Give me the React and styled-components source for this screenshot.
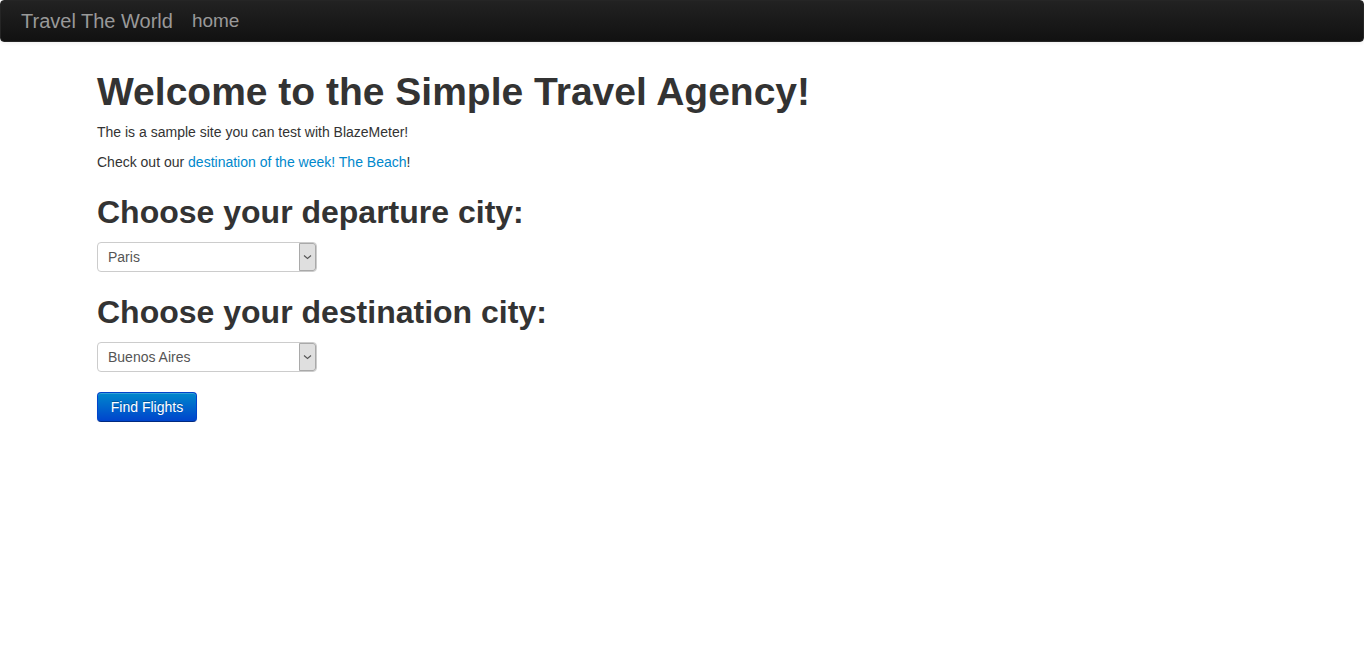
import React from "react";
import styled, { createGlobalStyle } from "styled-components";

const GlobalStyle = createGlobalStyle`
  html, body {
    margin: 0;
    padding: 0;
    background: #fff;
  }
  body {
    font-family: "Liberation Sans", Arial, sans-serif;
    font-size: 14px;
    line-height: 20px;
    color: #333;
  }
`;

const Navbar = styled.div`
  display: flex;
  align-items: center;
  gap: 19px;
  height: 40px;
  padding: 0 20px;
  border: 1px solid #252525;
  border-radius: 4px;
  background-image: linear-gradient(to bottom, #222222, #111111);
  box-shadow: 0 1px 4px rgba(0, 0, 0, 0.065);
  margin-bottom: 20px;
`;

const NavLink = styled.a`
  color: #999;
  font-size: ${(p) => p.size || 20}px;
  line-height: 20px;
  text-decoration: none;
`;

const Container = styled.div`
  width: 1170px;
  margin: 0 auto;
  padding-top: 10px;
`;

const Title = styled.h1`
  margin: 0 0 10px;
  font-size: 39px;
  line-height: 40px;
  font-weight: bold;
  color: #333;
`;

const Text = styled.p`
  margin: 0 0 10px;
`;

const Link = styled.a`
  color: #0088cc;
  text-decoration: none;
`;

const Form = styled.form`
  margin-top: 20px;
`;

const Subtitle = styled.h2`
  margin: 0 0 10px;
  font-size: 32px;
  line-height: 40px;
  font-weight: bold;
  color: #333;
`;

const SelectWrap = styled.div`
  position: relative;
  width: 220px;
  height: 30px;
  margin-bottom: 20px;
`;

const Select = styled.select`
  appearance: none;
  -webkit-appearance: none;
  box-sizing: border-box;
  width: 220px;
  height: 30px;
  padding: 4px 10px;
  border: 1px solid #ccc;
  border-radius: 4px;
  background: #fff;
  color: #555;
  font-family: "Liberation Sans", Arial, sans-serif;
  font-size: 14px;
  line-height: 20px;
  outline: none;
`;

const ArrowBox = styled.span`
  position: absolute;
  top: 1px;
  right: 1px;
  bottom: 1px;
  width: 17px;
  display: flex;
  align-items: center;
  justify-content: center;
  box-sizing: border-box;
  border: 1px solid #a9a9a9;
  border-radius: 0 3px 3px 0;
  background: #dfdfdf;
  pointer-events: none;
`;

const Button = styled.button`
  box-sizing: border-box;
  width: 100px;
  height: 30px;
  padding: 4px 12px;
  border: 1px solid #0044cc;
  border-bottom-color: #002a80;
  border-radius: 4px;
  background-image: linear-gradient(to bottom, #0088cc, #0044cc);
  box-shadow: inset 0 1px 0 rgba(255, 255, 255, 0.2), 0 1px 2px rgba(0, 0, 0, 0.05);
  color: #fff;
  font-family: "Liberation Sans", Arial, sans-serif;
  font-size: 14px;
  line-height: 20px;
  text-shadow: 0 -1px 0 rgba(0, 0, 0, 0.25);
  cursor: pointer;
`;

const Chevron = () => (
  <svg width="9" height="6" viewBox="0 0 9 6">
    <path d="M1 1.5 L4.5 4.5 L8 1.5" fill="none" stroke="#555" strokeWidth="1.1" />
  </svg>
);

const CitySelect = ({ name, options }) => (
  <SelectWrap>
    <Select name={name} defaultValue={options[0]}>
      {options.map((o) => (
        <option key={o} value={o}>
          {o}
        </option>
      ))}
    </Select>
    <ArrowBox>
      <Chevron />
    </ArrowBox>
  </SelectWrap>
);

const App = () => {
  return (
    <>
      <GlobalStyle />
      <Navbar>
        <NavLink href="#">Travel The World</NavLink>
        <NavLink href="#" size={19}>home</NavLink>
      </Navbar>
      <Container>
        <Title>Welcome to the Simple Travel Agency!</Title>
        <Text>The is a sample site you can test with BlazeMeter!</Text>
        <Text>
          Check out our <Link href="#">destination of the week! The Beach</Link>!
        </Text>
        <Form onSubmit={(e) => e.preventDefault()}>
          <Subtitle>Choose your departure city:</Subtitle>
          <CitySelect
            name="fromPort"
            options={["Paris", "Philadelphia", "Boston", "Portland", "San Diego", "Mexico City", "São Paolo"]}
          />
          <Subtitle>Choose your destination city:</Subtitle>
          <CitySelect
            name="toPort"
            options={["Buenos Aires", "Rome", "London", "Berlin", "New York", "Dublin", "Cairo"]}
          />
          <Button type="submit">Find Flights</Button>
        </Form>
      </Container>
    </>
  );
};

export default App;
